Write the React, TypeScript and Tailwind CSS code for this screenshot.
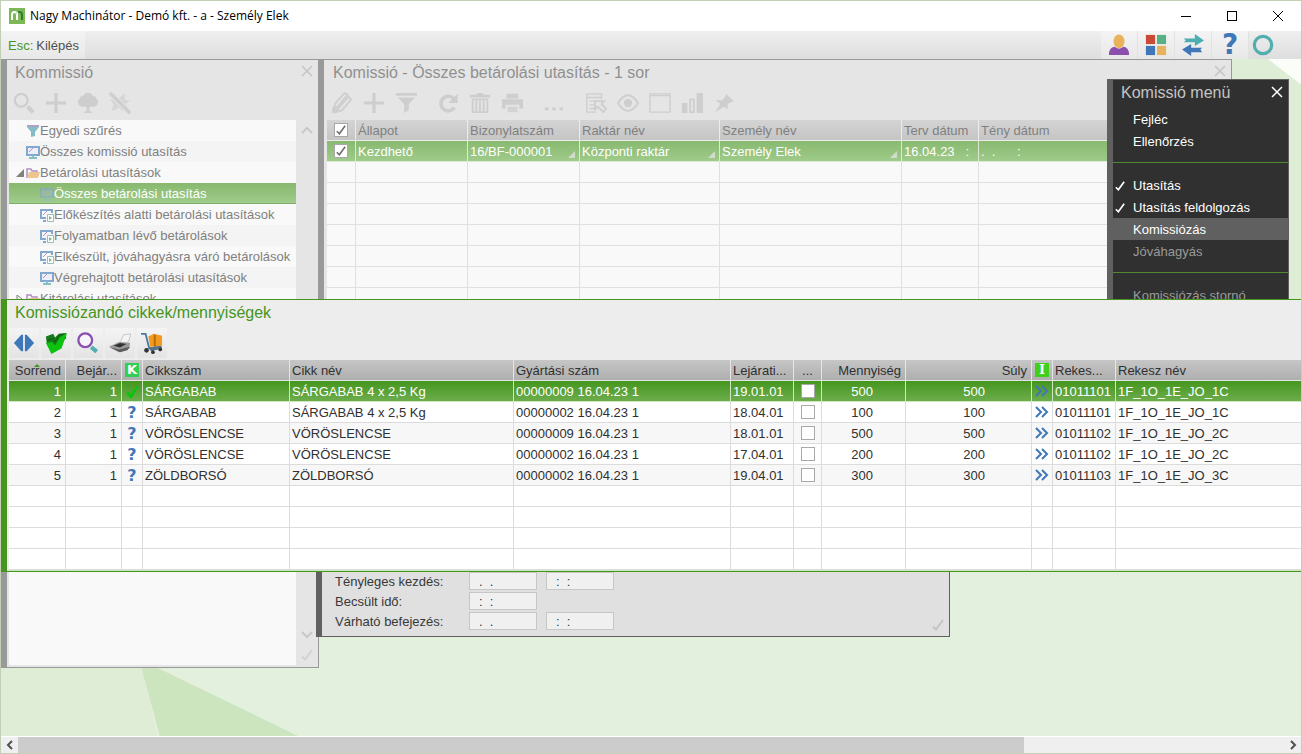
import { type ReactNode } from "react";
import { clsx } from "clsx";

const GLYPHS: Record<string, ReactNode> = {
  search: (
    <>
      <circle cx="9" cy="9" r="7" fill="none" stroke="currentColor" strokeWidth="2.500" />
      <path d="M16 16l6 6" stroke="currentColor" strokeWidth="4.500" />
    </>
  ),
  plus: <path d="M12 1v22M1 12h22" stroke="currentColor" strokeWidth="3.500" />,
  tree: (
    <path
      d="M6 16a5 5 0 0 1-3-9A4 4 0 0 1 7 4a5.500 5.500 0 0 1 10 0 4 4 0 0 1 4 3 5 5 0 0 1-3 9h-4.500v4.500l3 1.500v1h-9v-1l3-1.500V16z"
      fill="currentColor"
    />
  ),
  unpin: (
    <>
      <path d="M12 6l5-5v8h6l-5 4 4 5-6-1-1 4-4-4-8 4 2-8-4-5h7z" fill="currentColor" opacity=".7" />
      <path d="M1 1l22 22" stroke="#e5e5e5" strokeWidth="6" />
      <path d="M1 1l22 22" stroke="currentColor" strokeWidth="4" />
    </>
  ),
  pencil: (
    <>
      <path d="M2 21l3-9L15 1l3 2L8 15zM8 18L19 5l3 3-10 12-7 2z" fill="none" stroke="currentColor" strokeWidth="2" />
      <path d="M1 23l1-8 7 6z" fill="currentColor" />
    </>
  ),
  filter: <path d="M1 1h23v3H1zM3 6h19l-7 7v7l-5 3V13z" fill="currentColor" />,
  refresh: (
    <>
      <path d="M19 17a8 8 0 1 1-.500-9.500" fill="none" stroke="currentColor" strokeWidth="4" />
      <path d="M22.500 2v10H12.500z" fill="currentColor" />
    </>
  ),
  trash: (
    <>
      <path d="M1 6V3h7l1-2h6l1 2h7v3z" fill="currentColor" />
      <path d="M4 8h16v14H4zM8 9v12M12 9v12M16 9v12" fill="none" stroke="currentColor" strokeWidth="2" />
    </>
  ),
  print: (
    <>
      <path d="M6 2h13v5H6zM1 8h23v10h-4v-4H5v4H1z" fill="currentColor" />
      <path d="M7 16h11v6H7z" fill="currentColor" opacity=".8" />
    </>
  ),
  dots: <path d="M2 17h4v3H2zM10 17h4v3h-4zM18 17h4v3h-4z" fill="currentColor" />,
  report: (
    <>
      <path d="M18 8V2H2v20h10M2 6h16M5 10h8M5 14h6M5 18h6" fill="none" stroke="currentColor" strokeWidth="1.500" />
      <path d="M11 10h10l-3 3 5 5-3 4-6-6-3 3z" fill="#e5e5e5" stroke="currentColor" strokeWidth="2" />
    </>
  ),
  eye: (
    <>
      <path d="M1 12q11-17 22 0-11 17-22 0z" fill="none" stroke="currentColor" strokeWidth="2" />
      <circle cx="12" cy="12" r="4.500" fill="currentColor" />
    </>
  ),
  frame: <path d="M1 2h22v20H1zM1 4h22" fill="none" stroke="currentColor" strokeWidth="1.500" />,
  chart: (
    <>
      <path d="M1 12h6v11H1zM17 1h7v22h-7z" fill="currentColor" />
      <path d="M10 8h4v14h-4z" fill="none" stroke="currentColor" strokeWidth="2" />
    </>
  ),
  pin: <path d="M14 2l9 8-3 1-4 2v6l-4-3-10 6 6-9-5-4h7l3-3z" fill="currentColor" />,
  split: <path d="M1 12l8-9h2v18H9zM23 12l-8-9h-2v18h2z" fill="#3f78b8" />,
  approve: (
    <>
      <path d="M1 5l8-3 2 4 4-4 8-1v6L12 15 2 13z" fill="#167a18" />
      <path d="M1 12l7-1 3 4 5-9 8-5-6 17-11 6z" fill="#0bc20f" />
      <path d="M3 9l6-2 2 4 4-7 5-2" fill="none" stroke="#0d5c10" />
    </>
  ),
  magnify: (
    <>
      <circle cx="9" cy="9" r="7.500" fill="#f6f6fa" stroke="#8a50b0" strokeWidth="2.500" />
      <path d="M15.500 16.500l6 5" stroke="#54aeb0" strokeWidth="4.500" />
    </>
  ),
  printer: (
    <>
      <path d="M12 12l4-9 8-1-3 9z" fill="#f4f4f4" stroke="#c4c4c4" />
      <path d="M0 16l11-5 12 1-1 6-11 4z" fill="#9a9a9a" />
      <path d="M5 15l7-3 7 1-7 4z" fill="#333" />
      <path d="M1 17l10 2 12-3-3 4-8 2z" fill="#5b5b5b" />
    </>
  ),
  cart: (
    <>
      <path d="M0 2l5 0 4 16 13-2" fill="none" stroke="#4a78a0" strokeWidth="2" />
      <path d="M8 5l6-3 9 2v11l-13 1z" fill="#f09a20" />
      <path d="M15 3v13" stroke="#b86708" strokeWidth="2" />
      <path d="M8 17l14-2 1 3-12 3z" fill="#55738c" />
      <circle cx="6" cy="20" r="2.500" fill="#333" />
      <circle cx="13" cy="22" r="2" fill="#333" />
      <circle cx="21" cy="19" r="2" fill="#333" />
    </>
  ),
  user: (
    <>
      <path d="M1 23q0-8 6-9 5 4 10 0 6 1 6 9z" fill="#8b4fae" />
      <ellipse cx="12" cy="8" rx="6" ry="7.500" fill="#e9b25c" />
    </>
  ),
  tiles: (
    <>
      <path d="M1 1h10v10H1z" fill="#c94a35" />
      <path d="M13 1h10v10H13z" fill="#58b085" />
      <path d="M1 13h10v10H1z" fill="#3f78b8" />
      <path d="M13 13h10v10H13z" fill="#e9b25c" />
    </>
  ),
  swap: (
    <>
      <path d="M2 5h12V0l10 7-10 6V9H2l2-2z" fill="#4baeb0" />
      <path d="M22 15H10v-4L0 17l10 7v-4h12l-2-3z" fill="#3f78b8" />
    </>
  ),
  ring: <circle cx="12" cy="12" r="9.500" fill="none" stroke="#54aeb0" strokeWidth="3.500" />,
};

function Glyph({ name }: { name: string }) {
  return (
    <svg viewBox="0 0 24 24" className="size-[22px]" aria-hidden="true">
      {GLYPHS[name]}
    </svg>
  );
}

function CloseX({ className }: { className?: string }) {
  return (
    <svg viewBox="0 0 12 12" className={clsx("size-3", className)} aria-hidden="true">
      <path d="M1 1l10 10M11 1L1 11" stroke="currentColor" strokeWidth="1.500" />
    </svg>
  );
}

function Tick({ className }: { className?: string }) {
  return (
    <svg viewBox="0 0 12 12" className={clsx("size-3", className)} aria-hidden="true">
      <path d="M1 7.500l3 3L11 1" fill="none" stroke="currentColor" strokeWidth="2" />
    </svg>
  );
}

function Chevron({ d, className }: { d: string; className?: string }) {
  return (
    <svg viewBox="0 0 12 12" className={clsx("size-3", className)} aria-hidden="true">
      <path d={d} fill="none" stroke="currentColor" strokeWidth="2" />
    </svg>
  );
}

function ToolButton({ name, label, raised }: { name: string; label: string; raised?: boolean }) {
  return (
    <button
      type="button"
      aria-label={label}
      className={clsx("flex h-[30px] w-[30px] items-center justify-center", raised && "bg-gradient-to-b from-[#f4f4f4] to-[#e4e4e4]")}
    >
      <Glyph name={name} />
    </button>
  );
}

function CheckBox({ label, checked }: { label: string; checked?: boolean }) {
  return (
    <label className="mx-auto grid size-[14px] place-items-center">
      <input
        type="checkbox"
        aria-label={label}
        defaultChecked={checked}
        className="peer col-start-1 row-start-1 size-[14px] appearance-none border border-[#a8a8a8] bg-white"
      />
      <Tick className="invisible col-start-1 row-start-1 size-[10px] text-[#707070] peer-checked:visible" />
    </label>
  );
}

type TreeIcon = "funnel" | "screen" | "folder" | "step";

function TreeGlyph({ name, dim }: { name: TreeIcon; dim?: boolean }) {
  return (
    <svg viewBox="0 0 14 14" className={clsx("size-[14px] shrink-0", dim && "opacity-60")} aria-hidden="true">
      {name === "funnel" && (
        <>
          <path d="M1 1h12v2H1z" fill="#b0a0c8" />
          <path d="M1 3h12L9 8v4l-4 1V8z" fill="#83bfc4" />
        </>
      )}
      {name === "folder" && (
        <>
          <path d="M1 12V3h4l1 2h5v2" fill="none" stroke="#b18fc4" strokeWidth="1.500" />
          <path d="M3 6h11l-2 6H1z" fill="#ecc68d" />
        </>
      )}
      {name === "screen" && (
        <>
          <path d="M1 2h12v8H1z" fill={dim ? "#9cb8b8" : "#eeeef8"} stroke="#83a8d0" strokeWidth="2" />
          <path d="M3 7l4-4" stroke="#b18fc4" />
          <path d="M6 10h2v2h3v2H3v-2h3z" fill="#83bfc4" />
        </>
      )}
      {name === "step" && (
        <>
          <path d="M12 5V2H1v8h5M3 13h3" fill="none" stroke="#83a8d0" strokeWidth="2" />
          <path d="M3 7l4-4" stroke="#b18fc4" />
          <path d="M7.500 6.500h6v7h-6z" fill="#fff" stroke="#93bfc0" />
          <path d="M9 8l3 2-3 2z" fill="#7db98b" />
        </>
      )}
    </svg>
  );
}

interface TreeItem {
  label: string;
  icon: TreeIcon;
  nested?: boolean;
  expander?: "open" | "closed";
  selected?: boolean;
}

const TREE: TreeItem[] = [
  { label: "Egyedi szűrés", icon: "funnel" },
  { label: "Összes komissió utasítás", icon: "screen" },
  { label: "Betárolási utasítások", icon: "folder", expander: "open" },
  { label: "Összes betárolási utasítás", icon: "screen", nested: true, selected: true },
  { label: "Előkészítés alatti betárolási utasítások", icon: "step", nested: true },
  { label: "Folyamatban lévő betárolások", icon: "step", nested: true },
  { label: "Elkészült, jóváhagyásra váró betárolások", icon: "step", nested: true },
  { label: "Végrehajtott betárolási utasítások", icon: "screen", nested: true },
  { label: "Kitárolási utasítások", icon: "folder", expander: "closed" },
];

function TreeWindow() {
  return (
    <section className="absolute top-0 left-0 flex h-[609px] w-[318px] flex-col border-t border-r border-b border-l-6 border-[#999] bg-[#e5e5e5] text-[#808080]">
      <header className="flex h-6 items-center justify-between pt-0.5 pr-[5px] pl-2">
        <h2 className="text-base text-[#909090]">Kommissió</h2>
        <button type="button" aria-label="Bezárás" className="pb-1 text-[#c4c4c4]">
          <CloseX />
        </button>
      </header>
      <div className="flex h-9 items-center gap-0.5 pt-0.5 pl-0.5 text-[#cecece]">
        <ToolButton name="search" label="Keresés" />
        <ToolButton name="plus" label="Új" />
        <ToolButton name="tree" label="Fa nézet" />
        <ToolButton name="unpin" label="Rögzítés feloldása" />
      </div>
      <div className="flex min-h-0 flex-1 pb-0.5 pl-0.5">
        <ul className="min-w-0 flex-1 overflow-hidden bg-[#f9f9f9]">
          {TREE.map((item) => (
            <li
              key={item.label}
              className={clsx(
                "flex h-[21px] items-center pl-[5px] whitespace-nowrap",
                item.selected
                  ? "border-y border-t-[#89b970] border-b-[#80ad68] bg-gradient-to-b from-[#89b970] to-[#a0cc8b] text-white"
                  : "even:bg-[#f4f4f4]",
              )}
            >
              <span className={clsx("flex shrink-0 items-center justify-center", item.nested ? "w-[26px]" : "w-3")}>
                {item.expander === "open" && (
                  <svg viewBox="0 0 8 8" className="size-2" aria-hidden="true">
                    <path d="M8 0v8H0z" fill="#808080" />
                  </svg>
                )}
                {item.expander === "closed" && (
                  <svg viewBox="0 0 8 8" className="size-2" aria-hidden="true">
                    <path d="M1 0l5 4-5 4z" fill="none" stroke="#808080" />
                  </svg>
                )}
              </span>
              <TreeGlyph name={item.icon} dim={item.selected} />
              {item.label}
            </li>
          ))}
        </ul>
        <div className="flex w-[22px] flex-col items-center pt-1 pb-1 text-[#c8c8c8]">
          <Chevron d="M1 9l5-5 5 5" />
          <Chevron d="M1 3l5 5 5-5" className="mt-auto" />
          <Tick className="mt-2 text-[#d2d2d2]" />
        </div>
      </div>
    </section>
  );
}

function Corner() {
  return (
    <svg viewBox="0 0 6 6" className="mb-0.5 size-[7px] shrink-0" aria-hidden="true">
      <path d="M6 0v6H0z" fill="#d0dccb" />
    </svg>
  );
}

const ORDER_HEAD = ["Állapot", "Bizonylatszám", "Raktár név", "Személy név", "Terv dátum", "Tény dátum"];
const ORDER_ROW = [
  { value: "Kezdhető" },
  { value: "16/BF-000001", corner: true },
  { value: "Központi raktár", corner: true },
  { value: "Személy Elek", corner: true },
  { value: "16.04.23   :" },
  { value: ".  .      :" },
];

function OrdersWindow() {
  return (
    <section className="absolute top-0 left-[317px] h-[440px] w-[914px] border-t border-r border-b border-l-6 border-[#999] bg-[#e5e5e5] text-[#808080]">
      <header className="flex h-6 items-center justify-between pt-0.5 pr-[5px] pl-[9px]">
        <h2 className="text-base text-[#909090]">Komissió - Összes betárolási utasítás - 1 sor</h2>
        <button type="button" aria-label="Bezárás" className="pb-1 text-[#c4c4c4]">
          <CloseX />
        </button>
      </header>
      <div className="flex h-9 items-center gap-3 pt-0.5 pl-[3px] text-[#cecece]">
        <div className="flex gap-0.5">
          <ToolButton name="pencil" label="Módosítás" />
          <ToolButton name="plus" label="Új" />
          <ToolButton name="filter" label="Szűrés" />
        </div>
        <div className="flex gap-0.5">
          <ToolButton name="refresh" label="Frissítés" />
          <ToolButton name="trash" label="Törlés" />
          <ToolButton name="print" label="Nyomtatás" />
        </div>
        <ToolButton name="dots" label="Egyebek" />
        <div className="flex gap-0.5">
          <ToolButton name="report" label="Lista" />
          <ToolButton name="eye" label="Megtekintés" />
          <ToolButton name="frame" label="Ablak" />
          <ToolButton name="chart" label="Grafikon" />
          <ToolButton name="pin" label="Rögzítés" />
        </div>
      </div>
      <div className="pl-[3px]">
        <table className="w-full table-fixed border-separate border-spacing-0 bg-[#f9f9f9] text-left whitespace-pre">
          <colgroup>
            <col className="w-[29px]" />
            <col className="w-[112px]" />
            <col className="w-[112px]" />
            <col className="w-[140px]" />
            <col className="w-[182px]" />
            <col className="w-[77px]" />
            <col />
          </colgroup>
          <thead>
            <tr className="h-[21px] bg-gradient-to-b from-[#d4d4d4] to-[#c4c4c4]">
              <th className="border-r border-b border-[#ececec] p-0">
                <CheckBox label="Összes kijelölése" checked />
              </th>
              {ORDER_HEAD.map((head) => (
                <th key={head} className="border-r border-b border-[#ececec] p-0 pt-0.5 pl-0.5 font-normal">
                  {head}
                </th>
              ))}
            </tr>
          </thead>
          <tbody>
            <tr className="h-[21px] bg-gradient-to-b from-[#89b970] to-[#a0cc8b] text-white">
              <td className="border-r border-b border-[#dcead4] p-0">
                <CheckBox label="Kezdhető" checked />
              </td>
              {ORDER_ROW.map((cell) => (
                <td key={cell.value} className="border-r border-b border-[#dcead4] p-0 pt-0.5 pl-0.5">
                  <div className="flex items-end justify-between pr-1">
                    {cell.value}
                    {cell.corner && <Corner />}
                  </div>
                </td>
              ))}
            </tr>
            {Array.from({ length: 9 }, (_, row) => (
              <tr key={row} className="h-[21px]">
                {Array.from({ length: 7 }, (_, cell) => (
                  <td key={cell} className="border-r border-b border-[#e0e0e0] p-0" />
                ))}
              </tr>
            ))}
          </tbody>
        </table>
      </div>
    </section>
  );
}

const TIME_FIELDS = [
  { label: "Tényleges kezdés:", values: [".  .", ":  :"] },
  { label: "Becsült idő:", values: [":  :"] },
  { label: "Várható befejezés:", values: [".  .", ":  :"] },
];

function TimesForm() {
  return (
    <form className="absolute top-[480px] left-[315px] flex w-[634px] justify-between border-t border-r border-b border-l-6 border-[#606060] bg-[#e0e0e0] pt-[31px] pr-[5px] pb-[5px] pl-[13px] text-[#383838]">
      <div>
        {TIME_FIELDS.map((field, row) => (
          <div key={field.label} className="flex h-5 items-center gap-[9px]">
            <label htmlFor={`time-${row}-0`} className="w-[125px] pt-0.5">
              {field.label}
            </label>
            {field.values.map((value, index) => (
              <input
                key={index}
                id={`time-${row}-${index}`}
                aria-label={index ? `${field.label} idő` : undefined}
                defaultValue={value}
                className="h-[18px] w-[68px] border border-[#c6c6c6] bg-[#f0f0f0] pl-[9px]"
              />
            ))}
          </div>
        ))}
      </div>
      <button type="button" aria-label="Rendben" className="self-end text-[#c2c6c2]">
        <Tick />
      </button>
    </form>
  );
}

const MENU_GROUPS = [
  [{ label: "Fejléc" }, { label: "Ellenőrzés" }],
  [
    { label: "Utasítás", ticked: true },
    { label: "Utasítás feldolgozás", ticked: true },
    { label: "Komissiózás", active: true },
    { label: "Jóváhagyás", muted: true },
  ],
  [{ label: "Komissiózás stornó", muted: true }],
] as { label: string; ticked?: boolean; active?: boolean; muted?: boolean }[][];

function ContextMenu() {
  return (
    <nav className="absolute top-5 left-[1106px] w-[182px] border-t border-r border-b border-l-6 border-[#606060] bg-[#303030] pb-3 text-white">
      <header className="flex h-7 items-center justify-between pr-[5px] pb-0.5 pl-2">
        <h2 className="text-base text-[#c4c4c4]">Komissió menü</h2>
        <button type="button" aria-label="Bezárás" className="pb-0.5">
          <CloseX />
        </button>
      </header>
      {MENU_GROUPS.map((group, index) => (
        <div key={index}>
          {index > 0 && <hr className="mt-[10px] mb-[11px] border-t border-[#4f8a30]" />}
          {group.map((item) => (
            <button
              key={item.label}
              type="button"
              className={clsx(
                "flex h-[22px] w-full items-center pt-0.5 text-left",
                item.active && "bg-[#606060]",
                item.muted && "text-[#9a9a9a]",
              )}
            >
              <span className="w-5 pl-0.5">{item.ticked && <Tick className="size-[10px]" />}</span>
              {item.label}
            </button>
          ))}
        </div>
      ))}
    </nav>
  );
}

interface Pick {
  item: string;
  name: string;
  lot: string;
  expiry: string;
  qty: number;
  bin: string;
  binName: string;
}

const PICKS: Pick[] = [
  { item: "SÁRGABAB", name: "SÁRGABAB 4 x 2,5 Kg", lot: "00000009 16.04.23 1", expiry: "19.01.01", qty: 500, bin: "01011101", binName: "1F_1O_1E_JO_1C" },
  { item: "SÁRGABAB", name: "SÁRGABAB 4 x 2,5 Kg", lot: "00000002 16.04.23 1", expiry: "18.04.01", qty: 100, bin: "01011101", binName: "1F_1O_1E_JO_1C" },
  { item: "VÖRÖSLENCSE", name: "VÖRÖSLENCSE", lot: "00000009 16.04.23 1", expiry: "18.01.01", qty: 500, bin: "01011102", binName: "1F_1O_1E_JO_2C" },
  { item: "VÖRÖSLENCSE", name: "VÖRÖSLENCSE", lot: "00000002 16.04.23 1", expiry: "17.04.01", qty: 200, bin: "01011102", binName: "1F_1O_1E_JO_2C" },
  { item: "ZÖLDBORSÓ", name: "ZÖLDBORSÓ", lot: "00000002 16.04.23 1", expiry: "19.04.01", qty: 300, bin: "01011103", binName: "1F_1O_1E_JO_3C" },
];

function Head({ children, className }: { children: ReactNode; className?: string }) {
  return <th className={clsx("border-r border-b border-[#e6e6e6] p-0 font-normal", className)}>{children}</th>;
}

function PickRow({ pick, index }: { pick: Pick; index: number }) {
  const first = index === 0;
  const cell = clsx("border-r border-b p-0", first ? "border-[#cfe6c2]" : "border-[#dcdcdc]");
  const textCell = clsx(cell, "pt-0.5");

  return (
    <tr className={clsx("h-[21px]", first ? "bg-gradient-to-b from-[#43961a] to-[#6fae4e] text-white" : "odd:bg-[#f7f7f7]")}>
      <td className={clsx(textCell, "pr-1 text-right")}>{index + 1}</td>
      <td className={clsx(textCell, "pr-1 text-right")}>1</td>
      <td className={clsx(textCell, "text-center")}>
        {first ? (
          <svg viewBox="0 0 14 14" className="mx-auto size-[14px]" role="img" aria-label="Kész">
            <path d="M1 8l3-1 2 2q2-5 6-8l1 1-6 11H5z" fill="#0bc20f" />
          </svg>
        ) : (
          <span className="block font-['DejaVu_Sans',sans-serif] text-base leading-4 font-bold text-[#3f78b8]">?</span>
        )}
      </td>
      <td className={clsx(textCell, "pl-0.5")}>{pick.item}</td>
      <td className={clsx(textCell, "pl-0.5")}>{pick.name}</td>
      <td className={clsx(textCell, "pl-0.5")}>{pick.lot}</td>
      <td className={clsx(textCell, "pl-0.5")}>{pick.expiry}</td>
      <td className={cell}>
        <CheckBox label={`${index + 1}. sor`} />
      </td>
      <td className={clsx(textCell, "pr-8 text-right")}>{pick.qty}</td>
      <td className={clsx(textCell, "pr-[46px] text-right")}>{pick.qty}</td>
      <td className={cell}>
        <svg viewBox="0 0 14 14" className="mx-auto size-[14px]" aria-hidden="true">
          <path d="M1 2l5 5-5 5M7 2l5 5-5 5" fill="none" stroke="#3f78b8" strokeWidth="2" />
        </svg>
      </td>
      <td className={clsx(textCell, "pl-0.5")}>{pick.bin}</td>
      <td className={clsx(textCell, "border-r-0 pl-0.5")}>{pick.binName}</td>
    </tr>
  );
}

function PickPanel() {
  return (
    <section className="absolute inset-x-0 top-[240px] border-t border-b border-l-6 border-[#46951f] bg-[#ededed] text-[#303030]">
      <header className="flex h-6 items-center pt-0.5 pl-2">
        <h2 className="text-base text-[#46951f]">Komissiózandó cikkek/mennyiségek</h2>
      </header>
      <div className="flex h-9 items-center gap-0.5 pt-0.5 pl-0.5">
        <ToolButton raised name="split" label="Oszlopszélesség" />
        <ToolButton raised name="approve" label="Jóváhagyás" />
        <ToolButton raised name="magnify" label="Keresés" />
        <ToolButton raised name="printer" label="Nyomtatás" />
        <ToolButton raised name="cart" label="Komissiózás" />
      </div>
      <div className="border-b border-[#cfe6c2] pl-0.5">
        <table className="w-full table-fixed border-separate border-spacing-0 bg-white text-left whitespace-nowrap">
          <colgroup>
            <col className="w-[57px]" />
            <col className="w-[56px]" />
            <col className="w-[21px]" />
            <col className="w-[147px]" />
            <col className="w-[224px]" />
            <col className="w-[217px]" />
            <col className="w-[63px]" />
            <col className="w-[28px]" />
            <col className="w-[84px]" />
            <col className="w-[126px]" />
            <col className="w-[21px]" />
            <col className="w-[63px]" />
            <col />
          </colgroup>
          <thead>
            <tr className="h-[21px] bg-gradient-to-b from-[#c6c6c6] to-[#adadad]">
              <Head className="relative pt-0.5 pr-1 text-right">
                Sorrend
                <svg viewBox="0 0 6 3" className="absolute top-1 left-[25px] h-[3px] w-[6px]" aria-hidden="true">
                  <path d="M3 0l3 3H0z" fill="#3f9a1c" />
                </svg>
              </Head>
              <Head className="pt-0.5 pr-1 text-right">Bejár...</Head>
              <Head>
                <span className="mx-auto block size-[14px] bg-[#2fcf58] text-center font-['DejaVu_Sans',sans-serif] text-[13px] leading-[14px] font-bold text-white">
                  K
                </span>
              </Head>
              <Head className="pt-0.5 pl-0.5">Cikkszám</Head>
              <Head className="pt-0.5 pl-0.5">Cikk név</Head>
              <Head className="pt-0.5 pl-0.5">Gyártási szám</Head>
              <Head className="pt-0.5 pl-0.5">Lejárati...</Head>
              <Head className="pt-0.5 text-center">...</Head>
              <Head className="pt-0.5 pr-1 text-right">Mennyiség</Head>
              <Head className="pt-0.5 pr-1 text-right">Súly</Head>
              <Head>
                <span className="mx-auto block size-[14px] bg-[#3fd01c] text-center font-['DejaVu_Serif',serif] text-[13px] leading-[14px] font-bold text-white">
                  I
                </span>
              </Head>
              <Head className="pt-0.5 pl-0.5">Rekes...</Head>
              <Head className="border-r-0 pt-0.5 pl-0.5">Rekesz név</Head>
            </tr>
          </thead>
          <tbody>
            {PICKS.map((pick, index) => (
              <PickRow key={index} pick={pick} index={index} />
            ))}
            {Array.from({ length: 4 }, (_, row) => (
              <tr key={row} className="h-[21px]">
                {Array.from({ length: 13 }, (_, cell) => (
                  <td key={cell} className="border-r border-b border-[#dcdcdc] p-0 last:border-r-0" />
                ))}
              </tr>
            ))}
          </tbody>
        </table>
      </div>
    </section>
  );
}

function TitleBar() {
  return (
    <header className="flex h-[30px] items-center bg-white pl-2 text-black">
      <svg viewBox="0 0 16 16" className="size-4" aria-hidden="true">
        <path d="M0 0h16v16H0z" fill="#7cb956" />
        <path d="M3 12V7q0-3 2.500-3T8 7v5" fill="none" stroke="#fff" strokeWidth="2" />
        <path d="M8 12V7q0-3 2.500-3T13 7v5" fill="none" stroke="#2f7d2a" strokeWidth="2" />
        <path d="M8 12V7q0-2 1-2.500" fill="none" stroke="#fff" strokeWidth="2" />
      </svg>
      <h1 className="flex-1 pl-[5px] font-['Open_Sans',sans-serif] text-xs">Nagy Machinátor - Demó kft. - a - Személy Elek</h1>
      <button type="button" aria-label="Kis méret" className="flex h-full w-[46px] items-center justify-center">
        <span className="h-px w-[10px] bg-black" />
      </button>
      <button type="button" aria-label="Teljes méret" className="flex h-full w-[46px] items-center justify-center">
        <span className="size-[10px] border border-black" />
      </button>
      <button type="button" aria-label="Bezárás" className="flex h-full w-[46px] items-center justify-center">
        <svg viewBox="0 0 10 10" className="size-[10px]" aria-hidden="true">
          <path d="M0 0l10 10M10 0L0 10" stroke="#000" />
        </svg>
      </button>
    </header>
  );
}

const SHORTCUTS = [
  { name: "user", label: "Felhasználó" },
  { name: "tiles", label: "Modulok" },
  { name: "swap", label: "Váltás" },
];

export default function App() {
  return (
    <div className="flex h-screen min-h-[700px] flex-col overflow-hidden border border-[#c3cfb4] font-['Liberation_Sans',Arial,sans-serif] text-[13px] leading-4">
      <TitleBar />
      <div className="flex h-7 shrink-0 items-center justify-between bg-gradient-to-b from-[#efefef] to-[#dedede] pr-6">
        <button type="button" className="flex h-full items-center gap-[3px] bg-white/30 pt-0.5 pr-1.5 pl-[7px] text-[#505050]">
          <span className="text-[#46951f]">Esc:</span>
          Kilépés
        </button>
        <div className="flex h-full items-center">
          {SHORTCUTS.map((item) => (
            <button
              key={item.name}
              type="button"
              aria-label={item.label}
              className="flex h-full w-[37px] items-center justify-center border-r border-[#e2e2e2] bg-white/30"
            >
              <Glyph name={item.name} />
            </button>
          ))}
          <button
            type="button"
            aria-label="Súgó"
            className="flex h-full w-[37px] items-center justify-center border-r border-[#e2e2e2] bg-white/30 font-['DejaVu_Sans',sans-serif] text-[28px] leading-7 font-bold text-[#3f78b8]"
          >
            ?
          </button>
          <button type="button" aria-label="Állapot" className="flex h-full w-7 items-center justify-center">
            <Glyph name="ring" />
          </button>
        </div>
      </div>
      <main className="relative min-h-0 flex-1 overflow-hidden bg-[#e4f0de]">
        <svg className="absolute size-full" aria-hidden="true">
          <path d="M0 500h110l31 109 18 80H0z" fill="#e0edd6" />
          <path d="M138 600l184 89H162z" fill="#cce5bf" />
          <path d="M1200 0h102v240h-102z" fill="#deedd6" />
          <path d="M1267 0h35v27z" fill="#fbfdf9" />
        </svg>
        <TreeWindow />
        <OrdersWindow />
        <TimesForm />
        <ContextMenu />
        <PickPanel />
      </main>
      <div className="flex h-[17px] shrink-0 border-t border-white bg-[#efefef] text-[#505050]">
        <button type="button" aria-label="Görgetés balra" className="flex w-[17px] items-center justify-center">
          <Chevron d="M8 2L4 6l4 4" />
        </button>
        <div className="flex-1">
          <div className="h-full w-[79.5%] bg-[#cccccc]" />
        </div>
        <button type="button" aria-label="Görgetés jobbra" className="flex w-[17px] items-center justify-center">
          <Chevron d="M4 2l4 4-4 4" />
        </button>
      </div>
    </div>
  );
}
